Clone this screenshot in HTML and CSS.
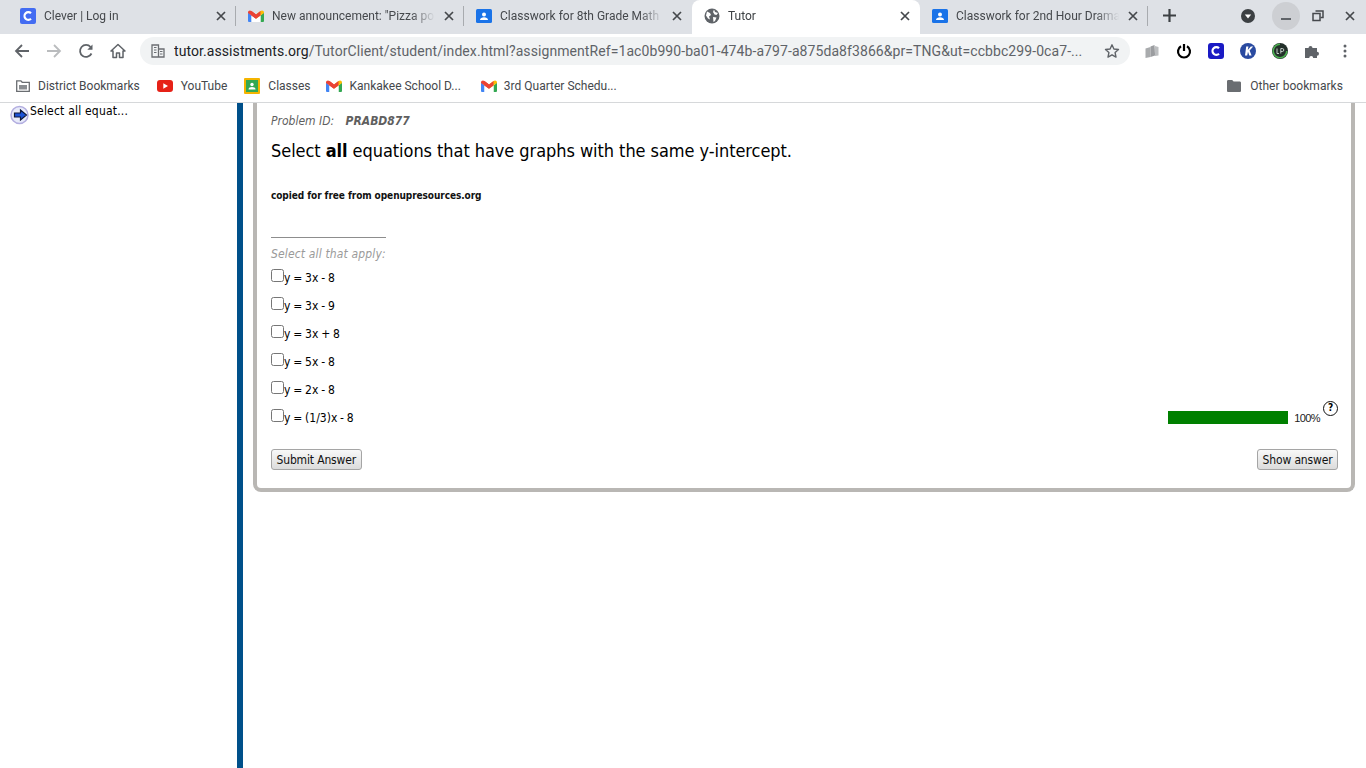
FILE: index.html
```html
<!DOCTYPE html>
<html lang="en">
<head>
  <meta charset="UTF-8">
  <title>Tutor</title>
  <link rel="stylesheet" href="styles.css">
</head>
<body>
  <svg class="defs" width="0" height="0">
    <symbol id="close" viewBox="0 0 12 12"><path d="M2 2l8 8M10 2l-8 8" stroke="#45484c" stroke-width="1.7" fill="none"/></symbol>
    <symbol id="gmail" viewBox="0 0 16 12">
      <path d="M0 2.500V11a1 1 0 0 0 1 1h2.500V5.500z" fill="#4285f4"/>
      <path d="M16 2.500V11a1 1 0 0 1-1 1h-2.500V5.500z" fill="#34a853"/>
      <path d="M3.500 12V5.500L8 8.800l4.500-3.300V12" fill="#fff"/>
      <path d="M0 2.500C0 .8 1.800-.4 3.500 1L8 4.400V8.800L0 3z" fill="#ea4335"/>
      <path d="M16 2.500C16 .8 14.200-.4 12.500 1L8 4.400V8.800L16 3z" fill="#fbbc04"/>
      <path d="M3.500 1L8 4.400 12.500 1v4.500L8 8.800 3.500 5.500z" fill="#ea4335"/>
    </symbol>
    <symbol id="classroom" viewBox="0 0 16 16">
      <rect y="1" width="16" height="14" rx="1.500" fill="#1a73e8"/>
      <circle cx="8" cy="6.500" r="2" fill="#fff"/>
      <path d="M4 12c0-2 2-2.800 4-2.800s4 .8 4 2.800z" fill="#fff"/>
    </symbol>
    <symbol id="folder" viewBox="0 0 14 12"><path d="M0 1.300C0 .6.600 0 1.300 0h3.900l1.400 1.500h6.100c.7 0 1.300.6 1.300 1.300v7.900c0 .7-.6 1.300-1.300 1.300H1.300C.6 12 0 11.400 0 10.700z" fill="#6a6d71"/></symbol>
  </svg>

  <div class="tabstrip">
    <div class="tab">
      <svg class="fav" viewBox="0 0 16 16"><rect width="16" height="16" rx="2" fill="#436cf2"/><path d="M11 5.300a3.800 3.800 0 1 0 0 5.400" fill="none" stroke="#fff" stroke-width="2.200"/></svg>
      <span class="tab-title">Clever | Log in</span>
      <svg class="tab-x"><use href="#close"/></svg>
    </div>
    <div class="tab">
      <svg class="fav gmail-fav" viewBox="0 0 16 12"><use href="#gmail"/></svg>
      <span class="tab-title">New announcement: "Pizza po</span>
      <svg class="tab-x"><use href="#close"/></svg>
    </div>
    <div class="tab">
      <svg class="fav"><use href="#classroom"/></svg>
      <span class="tab-title">Classwork for 8th Grade Math</span>
      <svg class="tab-x"><use href="#close"/></svg>
    </div>
    <div class="tab active">
      <svg class="fav" viewBox="0 0 16 16"><circle cx="8" cy="8" r="7.500" fill="#5f6368"/><path d="M3 3.500l3 1.500 1 2-2 1.500 1 3-2-1-2-3zM10 1.500l1 2.500 3 1-1.500 2-2-.5-1.500-2.500z" fill="#fff"/><path d="M9 9l3.500.5-1.500 3.500-1.500 1z" fill="#fff"/></svg>
      <span class="tab-title">Tutor</span>
      <svg class="tab-x"><use href="#close"/></svg>
    </div>
    <div class="tab">
      <svg class="fav"><use href="#classroom"/></svg>
      <span class="tab-title">Classwork for 2nd Hour Drama</span>
      <svg class="tab-x"><use href="#close"/></svg>
    </div>
    <svg class="new-tab" viewBox="0 0 12 12"><path d="M6 0v12M0 6h12" stroke="#3c4043" stroke-width="2"/></svg>
    <div class="win-controls">
      <svg class="win-search" viewBox="0 0 14 14"><circle cx="7" cy="7" r="7" fill="#3c4043"/><path d="M3.800 5.500h6.400L7 9.500z" fill="#fff"/></svg>
      <div class="win-min"><span></span></div>
      <svg class="win-restore" viewBox="0 0 12 12"><path d="M3.500 1h7.500v6.500H8.500" fill="none" stroke="#45484c" stroke-width="1.500"/><rect x="1" y="3.500" width="7" height="7" fill="none" stroke="#45484c" stroke-width="1.500"/></svg>
      <svg class="win-close"><use href="#close"/></svg>
    </div>
  </div>

  <div class="toolbar">
    <svg class="nav-icon" viewBox="0 0 16 16"><path d="M15 8H2M8 2L2 8l6 6" fill="none" stroke="#5f6368" stroke-width="1.800"/></svg>
    <svg class="nav-icon" viewBox="0 0 16 16"><path d="M1 8h13M8 2l6 6-6 6" fill="none" stroke="#babcbe" stroke-width="1.800"/></svg>
    <svg class="nav-icon" viewBox="0 0 16 16"><path d="M13.500 10.500A6 6 0 1 1 12.600 4" fill="none" stroke="#5f6368" stroke-width="1.800"/><path d="M14.500 1.500v5.200H9.300z" fill="#5f6368"/></svg>
    <svg class="nav-icon" viewBox="0 0 16 16"><path d="M8 1.500L1 8h2v6.500h3.500V10h3v4.500H13V8h2z" fill="none" stroke="#5f6368" stroke-width="1.500" stroke-linejoin="round"/></svg>
    <div class="omnibox">
      <svg class="site-icon" viewBox="0 0 14 14"><path d="M1 1h6.500v12H1zM7.500 5H13v8H7.500z" fill="none" stroke="#6b6e72" stroke-width="1.300"/><path d="M3 3.500h2.500M3 6h2.500M3 8.500h2.500M9 7.500h2.500M9 10h2.500" stroke="#6b6e72" stroke-width="1.200"/></svg>
      <span class="url"><b>tutor.assistments.org</b>/TutorClient/student/index.html?assignmentRef=1ac0b990-ba01-474b-a797-a875da8f3866&amp;pr=TNG&amp;ut=ccbbc299-0ca7-...</span>
      <svg class="star" viewBox="0 0 16 16"><path d="M8 1.800l1.900 4.200 4.600.5-3.400 3.100.9 4.500L8 11.800l-4 2.300.9-4.500L1.500 6.500l4.600-.5z" fill="none" stroke="#5f6368" stroke-width="1.400" stroke-linejoin="round"/></svg>
    </div>
    <div class="extensions">
      <svg class="ext" viewBox="0 0 16 16"><path d="M1.500 5.500l5-1.500v10l-5 1z" fill="#a9abad"/><path d="M6.500 3.500l4-1.500.6 10.500-4.600 1.500z" fill="#9b9da0"/><path d="M11 3l3.500 1v8.500L11 13z" fill="#bcbec0"/></svg>
      <svg class="ext" viewBox="0 0 16 16"><path d="M5 3.300a6 6 0 1 0 6 0" fill="none" stroke="#000" stroke-width="2.200"/><path d="M8 1v7" stroke="#000" stroke-width="2.200"/></svg>
      <svg class="ext" viewBox="0 0 16 16"><rect width="16" height="16" rx="3" fill="#1a1ac4"/><path d="M11 5.300a3.800 3.800 0 1 0 0 5.400" fill="none" stroke="#fff" stroke-width="2.200"/></svg>
      <svg class="ext" viewBox="0 0 16 16"><circle cx="8" cy="8" r="8" fill="#2a4aa0"/><path d="M6.200 3.500h2.200L7.800 7l3-3.500h2.400L9.600 7.600l2 4.900H9.300L8 8.700 7.200 12.500H5z" fill="#fff"/></svg>
      <svg class="ext" viewBox="0 0 16 16"><circle cx="8" cy="8" r="8" fill="#23302a"/><path d="M8 1.200a6.800 6.800 0 1 0 6.800 6.800" fill="none" stroke="#4caf50" stroke-width="1.600"/><path d="M5 5.500v5h2M8.800 10.500v-5h1.500a1.500 1.500 0 0 1 0 3H8.800" fill="none" stroke="#cfd8d3" stroke-width=".9"/></svg>
      <svg class="ext" viewBox="0 0 16 16"><path d="M1 5h3.500a2 2 0 1 1 4 0H13v3.800a2 2 0 1 1 0 4V15H9.200a2 2 0 1 0-4 0H1z" fill="#5f6368"/></svg>
      <svg class="menu" viewBox="0 0 4 14"><circle cx="2" cy="2" r="1.500" fill="#5f6368"/><circle cx="2" cy="7" r="1.500" fill="#5f6368"/><circle cx="2" cy="12" r="1.500" fill="#5f6368"/></svg>
    </div>
  </div>

  <div class="bookmarks">
    <div class="bm">
      <svg class="bm-folder" viewBox="0 0 14 12"><path d="M.7 11.300V.8h4.200l1.300 1.500h7.100v9z" fill="none" stroke="#6a6d71" stroke-width="1.300"/><path d="M3 5h8v4.500H3z" fill="#8a8d91"/></svg>
      <span>District Bookmarks</span>
    </div>
    <div class="bm">
      <svg class="bm-icon" viewBox="0 0 16 12"><rect width="16" height="12" rx="3" fill="#e62117"/><path d="M6.300 3.300L11 6l-4.700 2.700z" fill="#fff"/></svg>
      <span>YouTube</span>
    </div>
    <div class="bm bm-narrow">
      <svg class="bm-classes" viewBox="0 0 16 16"><rect width="16" height="16" rx="1" fill="#f4b400"/><rect x="2" y="2" width="12" height="12" fill="#34a853"/><circle cx="8" cy="6.500" r="1.700" fill="#fff"/><path d="M4.500 11.500c0-1.800 1.700-2.500 3.500-2.500s3.500.7 3.500 2.500z" fill="#fff"/></svg>
      <span>Classes</span>
    </div>
    <div class="bm bm-wide">
      <svg class="bm-icon"><use href="#gmail"/></svg>
      <span>Kankakee School D...</span>
    </div>
    <div class="bm bm-last">
      <svg class="bm-icon"><use href="#gmail"/></svg>
      <span>3rd Quarter Schedu...</span>
    </div>
    <div class="bm other">
      <svg class="bm-folder-solid"><use href="#folder"/></svg>
      <span>Other bookmarks</span>
    </div>
  </div>

  <div class="page">
    <aside class="sidebar">
      <div class="side-item">
        <svg class="side-arrow" viewBox="0 0 20 20">
          <circle cx="9.500" cy="10" r="8.500" fill="#e8ebfa" stroke="#b3aee0" stroke-width="1.500"/>
          <path d="M4.500 8h6V5l6 5-6 5v-3h-6z" fill="#1c53d8" stroke="#10183a" stroke-width="1.200"/>
        </svg>
        <span class="side-text">Select all equat...</span>
      </div>
    </aside>
    <main class="content">
      <section class="problem-card">
        <p class="problem-id">Problem ID: <b>PRABD877</b></p>
        <h2 class="question">Select <b>all</b> equations that have graphs with the same y-intercept.</h2>
        <p class="credit">copied for free from openupresources.org</p>
        <hr class="rule">
        <p class="hint">Select all that apply:</p>
        <div class="choices">
          <label class="choice"><input type="checkbox">y = 3x - 8</label>
          <label class="choice"><input type="checkbox">y = 3x - 9</label>
          <label class="choice"><input type="checkbox">y = 3x + 8</label>
          <label class="choice"><input type="checkbox">y = 5x - 8</label>
          <label class="choice"><input type="checkbox">y = 2x - 8</label>
          <div class="last-row">
            <label class="choice"><input type="checkbox">y = (1/3)x - 8</label>
            <div class="score">
              <div class="score-bar"></div>
              <span class="score-num">100%</span>
              <span class="help">?</span>
            </div>
          </div>
        </div>
        <div class="actions">
          <button class="btn">Submit Answer</button>
          <button class="btn">Show answer</button>
        </div>
      </section>
    </main>
  </div>
</body>
</html>
```

FILE: styles.css
```css
html, body {
  margin: 0;
  height: 768px;
  overflow: hidden;
  background: #fff;
}
body {
  font-family: "DejaVu Sans Condensed", "DejaVu Sans", sans-serif;
  font-stretch: condensed;
  color: #000;
}
.defs { position: absolute; }

/* browser chrome */
.tabstrip {
  display: flex;
  align-items: center;
  height: 31px;
  padding: 0 0 3px 8px;
  background: #dee1e6;
  font-family: Roboto, sans-serif;
  font-stretch: normal;
  font-size: 12px;
  color: #45484c;
}
.tab {
  position: relative;
  display: flex;
  align-items: center;
  box-sizing: border-box;
  width: 228px;
  height: 34px;
  margin-bottom: -3px;
  padding: 0 9px 3px 12px;
}
.tab::after {
  content: "";
  position: absolute;
  right: 0;
  top: 6px;
  height: 20px;
  width: 1px;
  background: #a8abaf;
}
.tab:nth-child(3)::after, .tab.active::after { display: none; }
.tab.active {
  background: #fff;
  border-radius: 8px 8px 0 0;
  color: #3c4043;
}
.fav { width: 16px; height: 16px; flex: none; }
.tab-title {
  flex: 1;
  margin-left: 8px;
  overflow: hidden;
  white-space: nowrap;
  -webkit-mask-image: linear-gradient(to right, #000 calc(100% - 32px), transparent calc(100% - 8px));
  mask-image: linear-gradient(to right, #000 calc(100% - 32px), transparent calc(100% - 8px));
}
.tab-x { width: 12px; height: 12px; flex: none; }
.new-tab { width: 13px; height: 13px; margin-left: 15px; flex: none; }
.win-controls {
  display: flex;
  align-items: center;
  margin-left: auto;
  padding-right: 10px;
}
.win-search { width: 14px; height: 14px; margin-right: 17px; }
.win-min {
  display: flex;
  align-items: center;
  justify-content: center;
  width: 28px;
  height: 28px;
  border-radius: 50%;
  background: #cdcfd3;
}
.win-min span { width: 10px; height: 2px; margin-top: 7px; background: #5f6368; }
.win-restore { width: 12px; height: 12px; margin-left: 12px; }
.win-close { width: 12px; height: 12px; margin-left: 20px; }

.toolbar {
  display: flex;
  align-items: center;
  height: 34px;
  padding-left: 14px;
}
.nav-icon { width: 16px; height: 16px; margin-right: 16px; flex: none; }
.nav-icon:nth-child(4) { margin-right: 14px; }
.omnibox {
  display: flex;
  align-items: center;
  flex: none;
  box-sizing: border-box;
  width: 990px;
  height: 28px;
  padding: 0 10px 0 11px;
  border-radius: 14px;
  background: #f1f3f4;
  font-family: Roboto, sans-serif;
  font-stretch: normal;
  font-size: 14px;
  letter-spacing: 0.08px;
  color: #5f6368;
}
.site-icon { width: 14px; height: 14px; flex: none; }
.url { flex: 1; margin-left: 9px; white-space: nowrap; overflow: hidden; }
.url b { font-weight: 400; color: #202124; }
.star { width: 16px; height: 16px; margin-left: 20px; flex: none; }
.extensions { display: flex; align-items: center; gap: 16px; margin-left: 14px; flex: none; }
.ext { width: 16px; height: 16px; flex: none; }
.menu { width: 4px; height: 14px; margin-left: 7px; }

.bookmarks {
  display: flex;
  align-items: center;
  box-sizing: content-box;
  height: 32px;
  padding: 2px 23px 0 16px;
  border-bottom: 1px solid #d6d8da;
  font-family: Roboto, sans-serif;
  font-stretch: normal;
  font-size: 12px;
  color: #45484c;
}
.bm { display: flex; align-items: center; gap: 8px; margin-right: 17px; white-space: nowrap; }
.bm-narrow { margin-right: 15px; }
.bm-wide { margin-right: 20px; }
.bm-last { gap: 7px; }
.bm-folder { width: 14px; height: 12px; }
.bm-folder-solid { width: 14px; height: 12px; }
.bm-icon { width: 16px; height: 12px; }
.bm-classes { width: 16px; height: 16px; }
.other { margin: 0 0 0 auto; gap: 9px; letter-spacing: 0.05px; }

/* tutor page */
.page { display: flex; height: 665px; }
.sidebar {
  box-sizing: border-box;
  width: 237px;
  flex: none;
  padding: 2px 0 0 10px;
  font-size: 12px;
}
.side-item { display: flex; align-items: flex-start; }
.side-arrow { width: 20px; height: 20px; flex: none; }
.side-text { margin-top: -1px; letter-spacing: 0.2px; }
.content {
  flex: 1;
  padding: 0 11px 0 10px;
  border-left: 6px solid #00508a;
}
.problem-card {
  box-sizing: border-box;
  height: 389px;
  padding: 11px 13px 0 14px;
  border: 4px solid #b9b7b4;
  border-top: 0;
  border-radius: 0 0 8px 8px;
  background: #fff;
  font-size: 12px;
}
.problem-id { margin: 0; height: 15px; line-height: 15px; font-style: italic; color: #5f5f5f; }
.problem-id b { margin-left: 8px; }
.question { margin: 11px 0 0; font-size: 18px; line-height: 22px; font-weight: 400; letter-spacing: -0.06px; }
.question b { font-weight: 700; }
.credit { margin: 27px 0 0; font-size: 10px; line-height: 13px; font-weight: 700; letter-spacing: -0.07px; color: #111; }
.rule { width: 115px; margin: 35px 0 0; border: 0; border-top: 1px solid #8d8d8d; }
.hint { margin: 9px 0 0; line-height: 15px; font-style: italic; letter-spacing: 0.15px; color: #9a9a9a; }
.choices { display: flex; flex-direction: column; margin-top: 2px; }
.choice { display: flex; align-items: center; height: 28px; line-height: 28px; word-spacing: -0.6px; }
.choice input { width: 13px; height: 13px; margin: -6px 0 0 0; flex: none; }
.last-row { display: flex; justify-content: space-between; align-items: center; }
.score { display: flex; align-items: flex-start; height: 28px; }
.score-bar { width: 120px; height: 13px; margin-top: 7px; background: #008000; }
.score-num {
  margin: 8px 0 0 6px;
  font-family: "Liberation Sans", sans-serif;
  font-stretch: normal;
  font-size: 11px;
  line-height: 13px;
  letter-spacing: -0.6px;
  color: #222;
}
.help {
  box-sizing: border-box;
  width: 15px;
  height: 15px;
  margin: -3px 0 0 3px;
  border: 1.500px solid #111;
  border-radius: 50%;
  font-size: 10px;
  line-height: 12px;
  font-weight: 700;
  text-align: center;
}
.actions { display: flex; justify-content: space-between; margin-top: 17px; }
.btn {
  box-sizing: border-box;
  height: 21px;
  padding: 0 4.500px;
  border: 1px solid #a5a5a5;
  border-radius: 3px;
  background: linear-gradient(#f8f8f8, #dcdcdc);
  font-family: inherit;
  font-stretch: condensed;
  font-size: 12px;
  letter-spacing: -0.15px;
  color: #111;
}
```
